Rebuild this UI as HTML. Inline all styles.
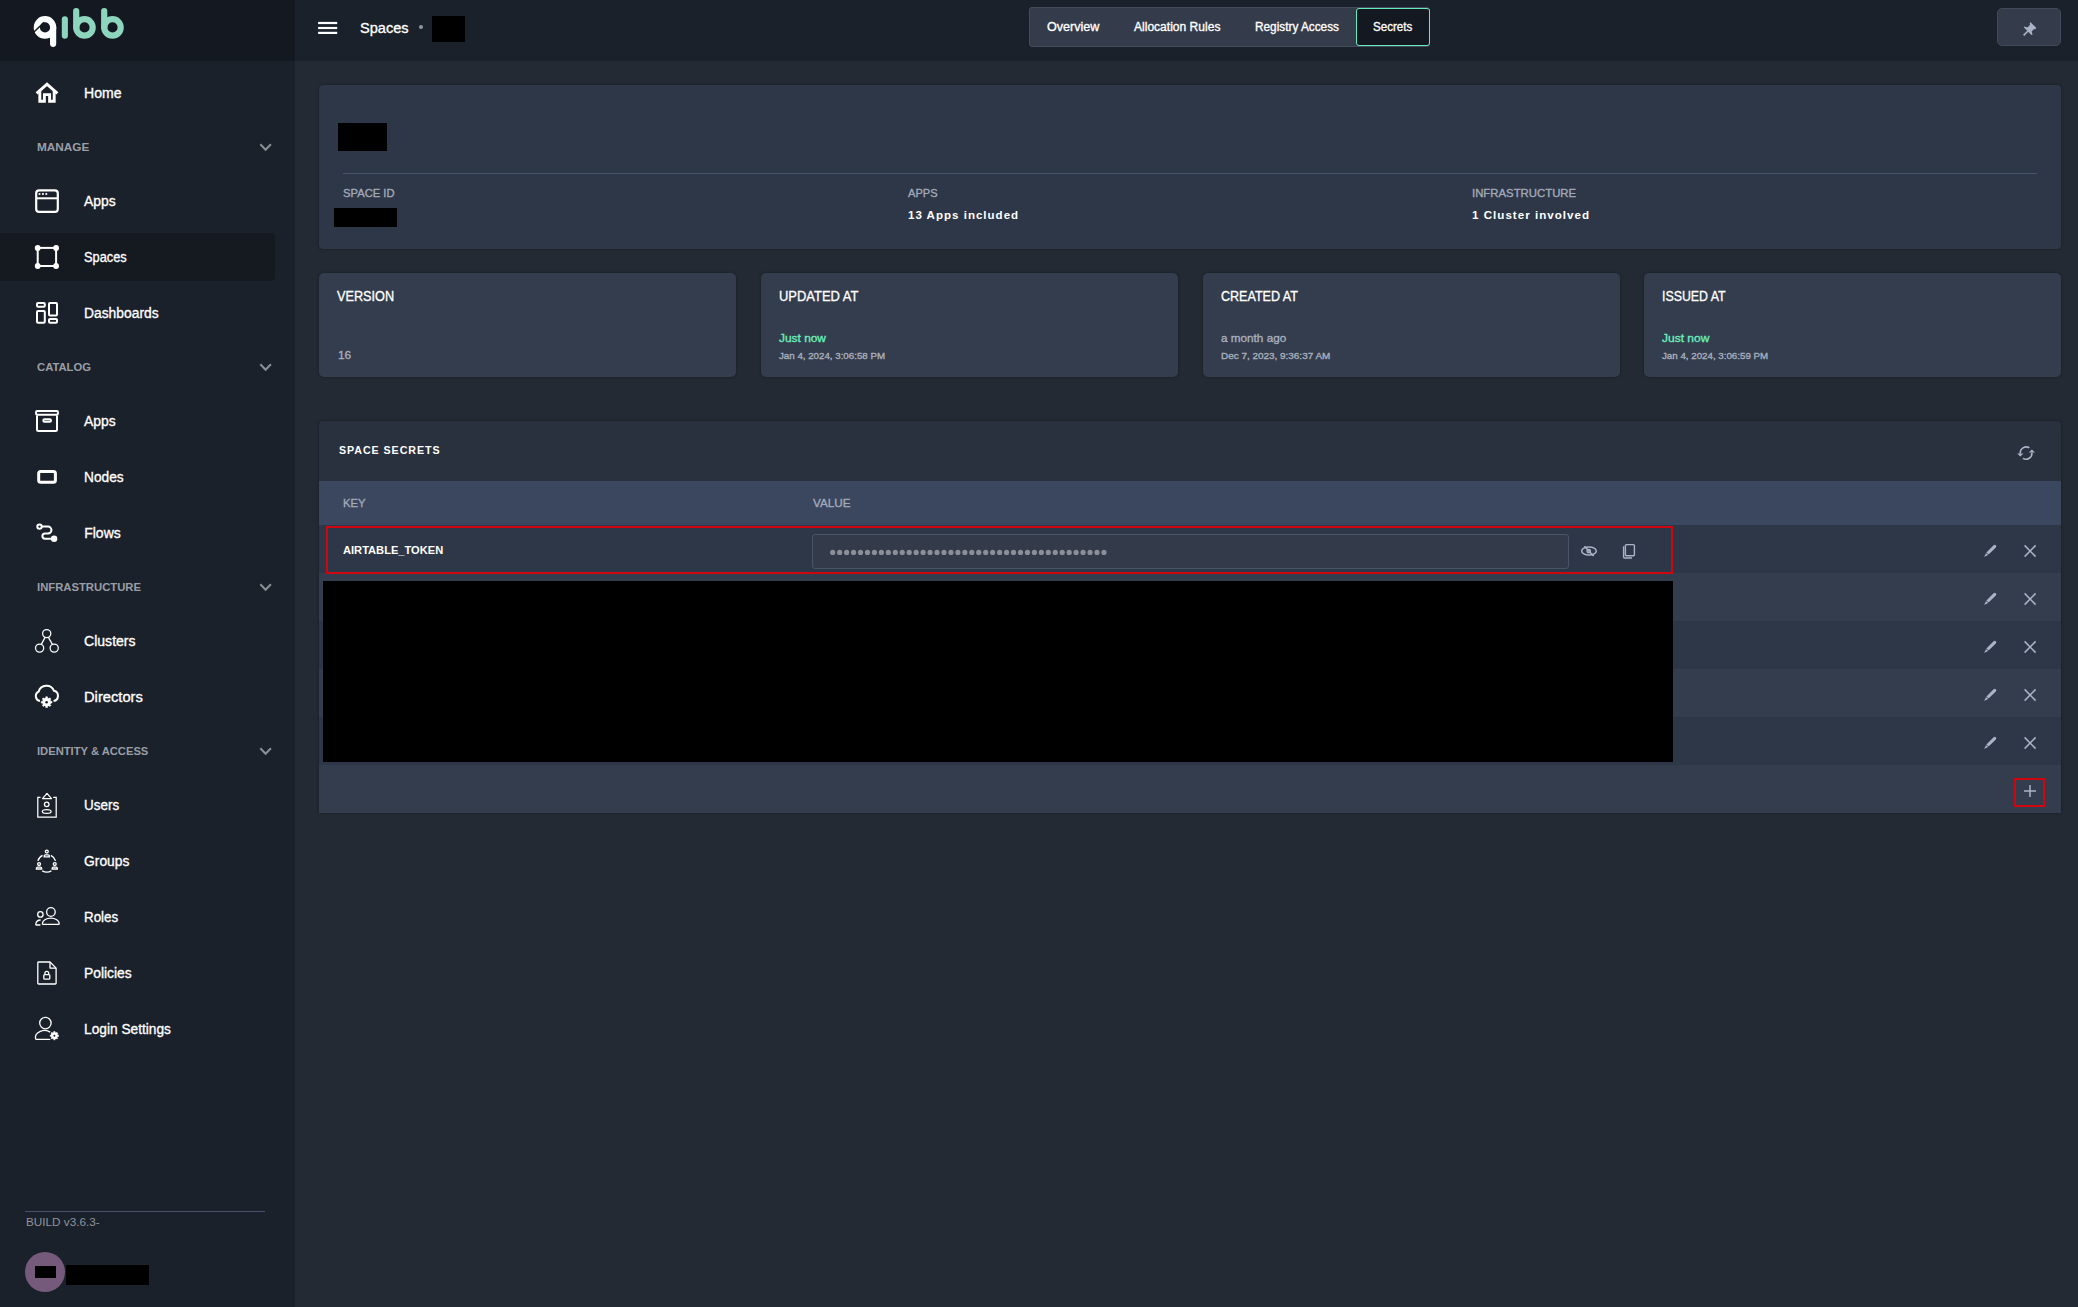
<!DOCTYPE html><html><head><meta charset="utf-8"><style>
*{margin:0;padding:0;box-sizing:border-box}
html,body{width:2078px;height:1307px;overflow:hidden;background:#232a33;font-family:"Liberation Sans",sans-serif;color:#fff}
.t{position:absolute;line-height:1;white-space:nowrap}
.b{position:absolute}
svg{position:absolute;overflow:visible}
</style></head><body>
<div class="b" style="left:0;top:0;width:295px;height:1307px;background:#1b212b"></div>
<div class="b" style="left:0;top:0;width:295px;height:61px;background:#141820"></div>
<svg style="left:25px;top:5px" width="110" height="50" viewBox="0 0 110 50">
<g fill="none" stroke-linecap="round">
<circle cx="20" cy="22.4" r="8.2" stroke="#fff" stroke-width="6.2"/>
<line x1="28.1" y1="22.4" x2="28.1" y2="38.8" stroke="#fff" stroke-width="6.2"/>
<line x1="7.6" y1="28.2" x2="19.2" y2="17.2" stroke="#141820" stroke-width="1.5" stroke-linecap="butt"/>
<line x1="39.85" y1="14.2" x2="39.85" y2="30.8" stroke="#8dd5bd" stroke-width="6.1"/>
<circle cx="59.5" cy="22.4" r="8.2" stroke="#8dd5bd" stroke-width="6.2"/>
<line x1="51.2" y1="6" x2="51.2" y2="22.4" stroke="#8dd5bd" stroke-width="6.2"/>
<circle cx="87.5" cy="22.4" r="8.2" stroke="#8dd5bd" stroke-width="6.2"/>
<line x1="79.2" y1="6" x2="79.2" y2="22.4" stroke="#8dd5bd" stroke-width="6.2"/>
</g></svg>
<svg style="left:0;top:69px" width="70" height="48" viewBox="0 0 70 48"><g fill="none" stroke="#fff"><path d="M36.6,24.4 L47,15.1 L57.4,24.4" stroke-width="2.9" stroke-linejoin="miter"/><path d="M39.8,22 V32.3 H44.4 V25.6 H49.6 V32.3 H54.2 V22" stroke-width="2.9" stroke-linejoin="miter"/></g></svg>
<div class="t" style="left:84.20px;top:86.15px;font-size:14px;color:#fff;font-weight:normal;-webkit-text-stroke:0.32px #fff;letter-spacing:0px;transform:scaleX(1.0032);transform-origin:0 0;">Home</div>

<svg style="left:0;top:177px" width="70" height="48" viewBox="0 0 70 48"><g fill="none" stroke="#fff"><rect x="36.2" y="13.3" width="21.6" height="21.6" rx="3" stroke-width="2.2"/><line x1="36.2" y1="21.3" x2="57.8" y2="21.3" stroke-width="2"/><g fill="#fff" stroke="none"><rect x="38.6" y="16.1" width="1.8" height="1.8"/><rect x="42" y="16.1" width="1.8" height="1.8"/><rect x="45.4" y="16.1" width="1.8" height="1.8"/></g></g></svg>
<div class="t" style="left:84.20px;top:194.15px;font-size:14px;color:#fff;font-weight:normal;-webkit-text-stroke:0.32px #fff;letter-spacing:0px;transform:scaleX(0.9931);transform-origin:0 0;">Apps</div>

<div class="b" style="left:0;top:233px;width:275px;height:48px;background:#151920;border-radius:0 4px 4px 0"></div>
<svg style="left:0;top:233px" width="70" height="48" viewBox="0 0 70 48"><g fill="none" stroke="#fff"><rect x="37.7" y="14.9" width="18.4" height="18.1" stroke-width="2"/><g fill="#fff" stroke="none"><circle cx="37.7" cy="14.9" r="2.9"/><circle cx="56.1" cy="14.9" r="2.9"/><circle cx="37.7" cy="33" r="2.9"/><circle cx="56.1" cy="33" r="2.9"/></g></g></svg>
<div class="t" style="left:84.20px;top:250.15px;font-size:14px;color:#fff;font-weight:normal;-webkit-text-stroke:0.32px #fff;letter-spacing:0px;transform:scaleX(0.9145);transform-origin:0 0;">Spaces</div>

<svg style="left:0;top:289px" width="70" height="48" viewBox="0 0 70 48"><g fill="none" stroke="#fff"><g stroke-width="2"><rect x="37" y="14" width="7.8" height="3.8" rx="1"/><rect x="37" y="22" width="7.8" height="11.8" rx="1"/><rect x="49" y="14" width="8" height="12.4" rx="1"/><rect x="49" y="30" width="8" height="3.8" rx="1"/></g></g></svg>
<div class="t" style="left:84.20px;top:306.15px;font-size:14px;color:#fff;font-weight:normal;-webkit-text-stroke:0.32px #fff;letter-spacing:0px;transform:scaleX(0.9886);transform-origin:0 0;">Dashboards</div>

<svg style="left:0;top:397px" width="70" height="48" viewBox="0 0 70 48"><g fill="none" stroke="#fff"><rect x="36.1" y="14.1" width="21.8" height="3.6" rx="1" stroke-width="2"/><path d="M37,18.5 V32.4 a1.5,1.5 0 0 0 1.5,1.5 H55.5 a1.5,1.5 0 0 0 1.5,-1.5 V18.5" stroke-width="2"/><rect x="43.3" y="22.3" width="7.7" height="2.4" rx="1.2" stroke-width="2"/></g></svg>
<div class="t" style="left:84.20px;top:414.15px;font-size:14px;color:#fff;font-weight:normal;-webkit-text-stroke:0.32px #fff;letter-spacing:0px;transform:scaleX(0.9931);transform-origin:0 0;">Apps</div>

<svg style="left:0;top:453px" width="70" height="48" viewBox="0 0 70 48"><g fill="none" stroke="#fff"><rect x="38.7" y="18.4" width="16.7" height="10.8" rx="2" stroke-width="3"/></g></svg>
<div class="t" style="left:84.20px;top:470.15px;font-size:14px;color:#fff;font-weight:normal;-webkit-text-stroke:0.32px #fff;letter-spacing:0px;transform:scaleX(0.9812);transform-origin:0 0;">Nodes</div>

<svg style="left:0;top:509px" width="70" height="48" viewBox="0 0 70 48"><g fill="none" stroke="#fff"><circle cx="39.5" cy="17.6" r="2.2" stroke-width="2"/><path d="M41.8,17.6 H48 A3.45,3.45 0 0 1 48,24.5 H45 A2.6,2.6 0 0 0 45,29.7 H52" stroke-width="2"/><circle cx="54.1" cy="29.7" r="3.2" fill="#fff" stroke="none"/></g></svg>
<div class="t" style="left:84.20px;top:526.15px;font-size:14px;color:#fff;font-weight:normal;-webkit-text-stroke:0.32px #fff;letter-spacing:0px;">Flows</div>

<svg style="left:0;top:617px" width="70" height="48" viewBox="0 0 70 48"><g fill="none" stroke="#fff"><g stroke-width="1.25"><circle cx="46.7" cy="16.6" r="4.1"/><circle cx="39.6" cy="31.1" r="4.1"/><circle cx="54.2" cy="31.1" r="4.1"/><line x1="45" y1="20.4" x2="41.4" y2="27.4"/><line x1="48.4" y1="20.4" x2="52.4" y2="27.4"/></g></g></svg>
<div class="t" style="left:84.20px;top:634.15px;font-size:14px;color:#fff;font-weight:normal;-webkit-text-stroke:0.32px #fff;letter-spacing:0px;transform:scaleX(1.0043);transform-origin:0 0;">Clusters</div>

<svg style="left:0;top:673px" width="70" height="48" viewBox="0 0 70 48"><g fill="none" stroke="#fff"><path d="M40,28 A5,5 0 0 1 38.6,18.6 A8.2,8.2 0 0 1 54,17.8 A5.2,5.2 0 0 1 53.5,28" stroke-width="2"/><g><circle cx="46.6" cy="29.2" r="6.7" fill="#1b212b" stroke="none"/><path d="M50.52,28.42 L51.93,28.31 L51.93,30.09 L50.52,29.98 L49.93,31.42 L50.99,32.34 L49.74,33.59 L48.82,32.53 L47.38,33.12 L47.49,34.53 L45.71,34.53 L45.82,33.12 L44.38,32.53 L43.46,33.59 L42.21,32.34 L43.27,31.42 L42.68,29.98 L41.27,30.09 L41.27,28.31 L42.68,28.42 L43.27,26.98 L42.21,26.06 L43.46,24.81 L44.38,25.87 L45.82,25.28 L45.71,23.87 L47.49,23.87 L47.38,25.28 L48.82,25.87 L49.74,24.81 L50.99,26.06 L49.93,26.98 Z" fill="#fff" stroke="#fff" stroke-width="0.6" stroke-linejoin="round"/><circle cx="46.6" cy="29.2" r="4.0" fill="#fff" stroke="none"/><circle cx="46.6" cy="29.2" r="1.3" fill="#1b212b" stroke="none"/></g></g></svg>
<div class="t" style="left:84.20px;top:690.15px;font-size:14px;color:#fff;font-weight:normal;-webkit-text-stroke:0.32px #fff;letter-spacing:0px;transform:scaleX(1.0500);transform-origin:0 0;">Directors</div>

<svg style="left:0;top:781px" width="70" height="48" viewBox="0 0 70 48"><g fill="none" stroke="#fff"><g stroke-width="1.25"><path d="M40.5,16.3 H37.8 V36 H56.2 V16.3 H53.2"/><path d="M42.5,17.6 L47,12.4 L51.5,17.6 Z" stroke-linejoin="round"/><circle cx="46.7" cy="23.3" r="2.3"/><ellipse cx="46.7" cy="30.4" rx="4.4" ry="1.9"/></g></g></svg>
<div class="t" style="left:84.20px;top:798.15px;font-size:14px;color:#fff;font-weight:normal;-webkit-text-stroke:0.32px #fff;letter-spacing:0px;transform:scaleX(0.9606);transform-origin:0 0;">Users</div>

<svg style="left:0;top:837px" width="70" height="48" viewBox="0 0 70 48"><g fill="none" stroke="#fff"><g stroke-width="1.35"><path d="M37.9,23.9 A9,9 0 0 1 42.5,18.3"/><path d="M50.9,18.3 A9,9 0 0 1 55.5,23.9"/><path d="M42.2,33.8 A9,9 0 0 0 51.4,33.8"/><circle cx="46.8" cy="14.6" r="1.45"/><path d="M44.20,19.8 V19.10 A1.3,1.3 0 0 1 45.50,17.8 H48.10 A1.3,1.3 0 0 1 49.40,19.10 V19.8 Z"/><circle cx="39.05" cy="27.0" r="1.45"/><path d="M36.45,32.0 V31.40 A1.3,1.3 0 0 1 37.75,30.1 H40.35 A1.3,1.3 0 0 1 41.65,31.40 V32.0 Z"/><circle cx="54.75" cy="27.0" r="1.45"/><path d="M52.15,32.0 V31.40 A1.3,1.3 0 0 1 53.45,30.1 H56.05 A1.3,1.3 0 0 1 57.35,31.40 V32.0 Z"/></g></g></svg>
<div class="t" style="left:84.20px;top:854.15px;font-size:14px;color:#fff;font-weight:normal;-webkit-text-stroke:0.32px #fff;letter-spacing:0px;transform:scaleX(0.9887);transform-origin:0 0;">Groups</div>

<svg style="left:0;top:893px" width="70" height="48" viewBox="0 0 70 48"><g fill="none" stroke="#fff"><g stroke-width="1.3"><circle cx="50.9" cy="19" r="4.3"/><path d="M43.2,31.4 H58.4 A0.9,0.9 0 0 0 59.2,30.4 A8.3,5.2 0 0 0 42.4,30.4 A0.9,0.9 0 0 0 43.2,31.4 Z"/><circle cx="40.4" cy="21.4" r="2.7"/><path d="M40.4,32 H36.2 A1,1 0 0 1 35.8,31 A5,4.5 0 0 1 40.6,27"/></g></g></svg>
<div class="t" style="left:84.20px;top:910.15px;font-size:14px;color:#fff;font-weight:normal;-webkit-text-stroke:0.32px #fff;letter-spacing:0px;transform:scaleX(0.9561);transform-origin:0 0;">Roles</div>

<svg style="left:0;top:949px" width="70" height="48" viewBox="0 0 70 48"><g fill="none" stroke="#fff"><g stroke-width="1.3" stroke-linejoin="round"><path d="M38.6,13 H50 L56.1,19.1 V34.2 A0.8,0.8 0 0 1 55.3,35 H38.6 A0.8,0.8 0 0 1 37.8,34.2 V13.8 A0.8,0.8 0 0 1 38.6,13 Z"/><path d="M50,13 V19.1 H56.1"/><rect x="43.8" y="25.6" width="6" height="4.6" rx="1"/><path d="M44.9,25.6 V24.2 A1.9,1.9 0 0 1 48.7,24.2 V25.6"/></g></g></svg>
<div class="t" style="left:84.20px;top:966.15px;font-size:14px;color:#fff;font-weight:normal;-webkit-text-stroke:0.32px #fff;letter-spacing:0px;transform:scaleX(0.9890);transform-origin:0 0;">Policies</div>

<svg style="left:0;top:1005px" width="70" height="48" viewBox="0 0 70 48"><g fill="none" stroke="#fff"><g stroke-width="1.3"><circle cx="45.4" cy="18.1" r="5.7"/><path d="M50.5,34.4 H36.2 A1,1 0 0 1 35.5,33.4 A9,7 0 0 1 50.5,27.4"/></g><circle cx="54.4" cy="30.7" r="5.5" fill="#1b212b" stroke="none"/><path d="M57.44,30.10 L58.54,30.01 L58.54,31.39 L57.44,31.30 L56.98,32.42 L57.82,33.14 L56.84,34.12 L56.12,33.28 L55.00,33.74 L55.09,34.84 L53.71,34.84 L53.80,33.74 L52.68,33.28 L51.96,34.12 L50.98,33.14 L51.82,32.42 L51.36,31.30 L50.26,31.39 L50.26,30.01 L51.36,30.10 L51.82,28.98 L50.98,28.26 L51.96,27.28 L52.68,28.12 L53.80,27.66 L53.71,26.56 L55.09,26.56 L55.00,27.66 L56.12,28.12 L56.84,27.28 L57.82,28.26 L56.98,28.98 Z" fill="#fff" stroke="#fff" stroke-width="0.6" stroke-linejoin="round"/><circle cx="54.4" cy="30.7" r="3.1" fill="#fff" stroke="none"/><circle cx="54.4" cy="30.7" r="1.0" fill="#1b212b" stroke="none"/></g></svg>
<div class="t" style="left:84.20px;top:1022.15px;font-size:14px;color:#fff;font-weight:normal;-webkit-text-stroke:0.32px #fff;letter-spacing:0px;transform:scaleX(0.9802);transform-origin:0 0;">Login Settings</div>

<div class="t" style="left:36.70px;top:141.69px;font-size:11px;color:#9a9ea6;font-weight:bold;letter-spacing:0px;transform:scaleX(1.0717);transform-origin:0 0;">MANAGE</div>

<svg style="left:259px;top:143px" width="14" height="10" viewBox="0 0 14 10"><path d="M1.3,1.3 L6.6,6.8 L11.9,1.3" fill="none" stroke="#8b8f96" stroke-width="2"/></svg>
<div class="t" style="left:36.70px;top:361.69px;font-size:11px;color:#9a9ea6;font-weight:bold;letter-spacing:0px;transform:scaleX(1.0238);transform-origin:0 0;">CATALOG</div>

<svg style="left:259px;top:363px" width="14" height="10" viewBox="0 0 14 10"><path d="M1.3,1.3 L6.6,6.8 L11.9,1.3" fill="none" stroke="#8b8f96" stroke-width="2"/></svg>
<div class="t" style="left:36.70px;top:581.69px;font-size:11px;color:#9a9ea6;font-weight:bold;letter-spacing:0px;transform:scaleX(1.0254);transform-origin:0 0;">INFRASTRUCTURE</div>

<svg style="left:259px;top:583px" width="14" height="10" viewBox="0 0 14 10"><path d="M1.3,1.3 L6.6,6.8 L11.9,1.3" fill="none" stroke="#8b8f96" stroke-width="2"/></svg>
<div class="t" style="left:36.70px;top:745.69px;font-size:11px;color:#9a9ea6;font-weight:bold;letter-spacing:0px;transform:scaleX(1.0174);transform-origin:0 0;">IDENTITY &amp; ACCESS</div>

<svg style="left:259px;top:747px" width="14" height="10" viewBox="0 0 14 10"><path d="M1.3,1.3 L6.6,6.8 L11.9,1.3" fill="none" stroke="#8b8f96" stroke-width="2"/></svg>
<div class="b" style="left:25px;top:1210.5px;width:240px;height:1px;background:#46506a"></div>
<div class="t" style="left:26.40px;top:1216.69px;font-size:11px;color:#909399;font-weight:normal;letter-spacing:0px;transform:scaleX(1.0654);transform-origin:0 0;">BUILD v3.6.3-</div>

<div class="b" style="left:25px;top:1252px;width:40px;height:40px;border-radius:50%;background:#765a7b"></div>
<div class="b" style="left:35px;top:1266px;width:21px;height:12px;background:#000"></div>
<div class="b" style="left:66px;top:1265px;width:83px;height:20px;background:#000"></div>
<div class="b" style="left:295px;top:0;width:1783px;height:61px;background:#1b212b"></div>
<svg style="left:318px;top:20px" width="20" height="16" viewBox="0 0 20 16"><g stroke="#fff" stroke-width="2.2"><line x1="0.1" y1="3" x2="19.2" y2="3"/><line x1="0.1" y1="8" x2="19.2" y2="8"/><line x1="0.1" y1="12.9" x2="19.2" y2="12.9"/></g></svg>
<div class="t" style="left:360.00px;top:19.78px;font-size:15.5px;color:#fff;font-weight:normal;-webkit-text-stroke:0.32px #fff;letter-spacing:0px;transform:scaleX(0.9402);transform-origin:0 0;">Spaces</div>

<div class="b" style="left:419.3px;top:25.3px;width:3.4px;height:3.4px;border-radius:50%;background:#8a8f99"></div>
<div class="b" style="left:432px;top:16px;width:33px;height:26px;background:#000"></div>
<div class="b" style="left:1029px;top:7px;width:401px;height:40px;background:#343c4b;border:1px solid #444c5c;border-radius:3px"></div>
<div class="b" style="left:1356px;top:8px;width:74px;height:38px;background:#141820;border:1.6px solid #66e9bf;border-radius:3px"></div>
<div class="t" style="left:1047.00px;top:20.64px;font-size:12px;color:#fff;font-weight:normal;-webkit-text-stroke:0.32px #fff;letter-spacing:0px;transform:scaleX(1.0472);transform-origin:0 0;">Overview</div>

<div class="t" style="left:1133.60px;top:20.64px;font-size:12px;color:#fff;font-weight:normal;-webkit-text-stroke:0.32px #fff;letter-spacing:0px;transform:scaleX(1.0042);transform-origin:0 0;">Allocation Rules</div>

<div class="t" style="left:1254.80px;top:20.64px;font-size:12px;color:#fff;font-weight:normal;-webkit-text-stroke:0.32px #fff;letter-spacing:0px;transform:scaleX(0.9838);transform-origin:0 0;">Registry Access</div>

<div class="t" style="left:1372.70px;top:20.64px;font-size:12px;color:#fff;font-weight:normal;-webkit-text-stroke:0.32px #fff;letter-spacing:0px;transform:scaleX(0.9661);transform-origin:0 0;">Secrets</div>

<div class="b" style="left:1997px;top:8px;width:64px;height:38px;background:#343c4b;border:1px solid #414a5a;border-radius:5px"></div>
<svg style="left:2020px;top:19px" width="20" height="20" viewBox="0 0 20 20"><g fill="#aab4c8"><path d="M10.3,3 L16.4,9.1 L15.2,10.3 L14.2,9.9 L11.6,12.5 L12.6,15.6 L11.4,16 L4.0,8.6 L4.4,7.4 L7.5,8.4 L10.1,5.8 L9.7,4.8 Z"/></g><line x1="8" y1="12" x2="3.6" y2="16.4" stroke="#aab4c8" stroke-width="1.6"/></svg>
<div class="b" style="left:319px;top:85px;width:1742px;height:164px;background:#2e3747;border-radius:4px;box-shadow:0 0 3px rgba(0,0,0,0.35)"></div>
<div class="b" style="left:338px;top:123px;width:49px;height:28px;background:#000"></div>
<div class="b" style="left:343px;top:172.5px;width:1694px;height:1px;background:#475670"></div>
<div class="t" style="left:342.70px;top:188.49px;font-size:11px;color:#a3abbb;font-weight:normal;-webkit-text-stroke:0.32px #a3abbb;letter-spacing:0px;transform:scaleX(1.0209);transform-origin:0 0;">SPACE ID</div>

<div class="t" style="left:907.90px;top:188.49px;font-size:11px;color:#a3abbb;font-weight:normal;-webkit-text-stroke:0.32px #a3abbb;letter-spacing:0px;transform:scaleX(1.0078);transform-origin:0 0;">APPS</div>

<div class="t" style="left:907.90px;top:210.17px;font-size:11.5px;color:#fff;font-weight:bold;letter-spacing:1.0px;transform:scaleX(1.0031);transform-origin:0 0;">13 Apps included</div>

<div class="t" style="left:1472.40px;top:188.49px;font-size:11px;color:#a3abbb;font-weight:normal;-webkit-text-stroke:0.32px #a3abbb;letter-spacing:0px;transform:scaleX(1.0326);transform-origin:0 0;">INFRASTRUCTURE</div>

<div class="t" style="left:1472.40px;top:210.17px;font-size:11.5px;color:#fff;font-weight:bold;letter-spacing:1.0px;transform:scaleX(1.0089);transform-origin:0 0;">1 Cluster involved</div>

<div class="b" style="left:334px;top:207.5px;width:63px;height:19.5px;background:#000"></div>
<div class="b" style="left:319px;top:273px;width:417px;height:104px;background:#343d4d;border-radius:5px;box-shadow:0 0 3px rgba(0,0,0,0.35)"></div>
<div class="t" style="left:337.00px;top:289.15px;font-size:14px;color:#fff;font-weight:normal;-webkit-text-stroke:0.32px #fff;letter-spacing:0px;transform:scaleX(0.9063);transform-origin:0 0;">VERSION</div>

<div class="t" style="left:337.60px;top:349.59px;font-size:11px;color:#a9b0be;font-weight:normal;-webkit-text-stroke:0.32px #a9b0be;letter-spacing:0px;transform:scaleX(1.0811);transform-origin:0 0;">16</div>

<div class="b" style="left:761px;top:273px;width:417px;height:104px;background:#343d4d;border-radius:5px;box-shadow:0 0 3px rgba(0,0,0,0.35)"></div>
<div class="t" style="left:779.00px;top:289.15px;font-size:14px;color:#fff;font-weight:normal;-webkit-text-stroke:0.32px #fff;letter-spacing:0px;transform:scaleX(0.9240);transform-origin:0 0;">UPDATED AT</div>

<div class="t" style="left:779.00px;top:332.69px;font-size:11px;color:#6aeebd;font-weight:normal;-webkit-text-stroke:0.32px #6aeebd;letter-spacing:0px;transform:scaleX(1.0817);transform-origin:0 0;">Just now</div>

<div class="t" style="left:779.00px;top:352.28px;font-size:9px;color:#a9b0be;font-weight:normal;-webkit-text-stroke:0.32px #a9b0be;letter-spacing:0px;transform:scaleX(1.0810);transform-origin:0 0;">Jan 4, 2024, 3:06:58 PM</div>

<div class="b" style="left:1203px;top:273px;width:417px;height:104px;background:#343d4d;border-radius:5px;box-shadow:0 0 3px rgba(0,0,0,0.35)"></div>
<div class="t" style="left:1221.00px;top:289.15px;font-size:14px;color:#fff;font-weight:normal;-webkit-text-stroke:0.32px #fff;letter-spacing:0px;transform:scaleX(0.8961);transform-origin:0 0;">CREATED AT</div>

<div class="t" style="left:1221.00px;top:332.69px;font-size:11px;color:#a9b0be;font-weight:normal;-webkit-text-stroke:0.32px #a9b0be;letter-spacing:0px;transform:scaleX(1.0661);transform-origin:0 0;">a month ago</div>

<div class="t" style="left:1221.00px;top:352.28px;font-size:9px;color:#a9b0be;font-weight:normal;-webkit-text-stroke:0.32px #a9b0be;letter-spacing:0px;transform:scaleX(1.1030);transform-origin:0 0;">Dec 7, 2023, 9:36:37 AM</div>

<div class="b" style="left:1644px;top:273px;width:417px;height:104px;background:#343d4d;border-radius:5px;box-shadow:0 0 3px rgba(0,0,0,0.35)"></div>
<div class="t" style="left:1662.00px;top:289.15px;font-size:14px;color:#fff;font-weight:normal;-webkit-text-stroke:0.32px #fff;letter-spacing:0px;transform:scaleX(0.8821);transform-origin:0 0;">ISSUED AT</div>

<div class="t" style="left:1662.00px;top:332.69px;font-size:11px;color:#6aeebd;font-weight:normal;-webkit-text-stroke:0.32px #6aeebd;letter-spacing:0px;transform:scaleX(1.0909);transform-origin:0 0;">Just now</div>

<div class="t" style="left:1662.00px;top:352.28px;font-size:9px;color:#a9b0be;font-weight:normal;-webkit-text-stroke:0.32px #a9b0be;letter-spacing:0px;transform:scaleX(1.0820);transform-origin:0 0;">Jan 4, 2024, 3:06:59 PM</div>

<div class="b" style="left:319px;top:421px;width:1742px;height:392px;background:#2a313e;border-radius:4px 4px 0 0;overflow:hidden;box-shadow:0 0 3px rgba(0,0,0,0.35)">
<div class="b" style="left:0;top:60px;width:1742px;height:44px;background:#3b475f"></div>
<div class="b" style="left:0;top:104px;width:1742px;height:48px;background:#2e3747"></div>
<div class="b" style="left:0;top:152px;width:1742px;height:48px;background:#343d4d"></div>
<div class="b" style="left:0;top:200px;width:1742px;height:48px;background:#2e3747"></div>
<div class="b" style="left:0;top:248px;width:1742px;height:48px;background:#343d4d"></div>
<div class="b" style="left:0;top:296px;width:1742px;height:48px;background:#2e3747"></div>
<div class="b" style="left:0;top:344px;width:1742px;height:48px;background:#343d4d"></div>
</div>
<div class="t" style="left:339.00px;top:445.27px;font-size:11.5px;color:#fff;font-weight:bold;letter-spacing:1.0px;transform:scaleX(0.9284);transform-origin:0 0;">SPACE SECRETS</div>

<div class="t" style="left:343.30px;top:497.89px;font-size:11px;color:#a3abbb;font-weight:normal;-webkit-text-stroke:0.32px #a3abbb;letter-spacing:0px;transform:scaleX(1.0227);transform-origin:0 0;">KEY</div>

<div class="t" style="left:812.60px;top:497.89px;font-size:11px;color:#a3abbb;font-weight:normal;-webkit-text-stroke:0.32px #a3abbb;letter-spacing:0px;transform:scaleX(1.0637);transform-origin:0 0;">VALUE</div>

<svg style="left:2016px;top:443px" width="20" height="20" viewBox="0 0 20 20"><g fill="none" stroke="#aab4c8" stroke-width="1.6"><path d="M13.4,4.8 A6,6 0 0 0 4.3,10.6"/><path d="M6.9,15.4 A6,6 0 0 0 15.9,9.6"/></g><g fill="#aab4c8"><path d="M1.1,10.4 L7.5,10.4 L4.3,13.4 Z"/><path d="M12.7,9.6 L19.1,9.6 L15.9,6.6 Z"/></g></svg>
<div class="b" style="left:325.5px;top:526px;width:1347px;height:48px;border:2px solid #cf0610"></div>
<div class="t" style="left:343.30px;top:544.87px;font-size:11.5px;color:#fff;font-weight:bold;letter-spacing:0px;transform:scaleX(0.9660);transform-origin:0 0;">AIRTABLE_TOKEN</div>

<div class="b" style="left:812px;top:534px;width:757px;height:35px;background:#333a4a;border:1px solid #4b5467;border-radius:3px"></div>
<svg style="left:0;top:0" width="2078" height="1307" viewBox="0 0 2078 1307"><g fill="#8a8f98"><circle cx="832.70" cy="552.4" r="2.6"/><circle cx="839.66" cy="552.4" r="2.6"/><circle cx="846.61" cy="552.4" r="2.6"/><circle cx="853.57" cy="552.4" r="2.6"/><circle cx="860.52" cy="552.4" r="2.6"/><circle cx="867.48" cy="552.4" r="2.6"/><circle cx="874.43" cy="552.4" r="2.6"/><circle cx="881.38" cy="552.4" r="2.6"/><circle cx="888.34" cy="552.4" r="2.6"/><circle cx="895.30" cy="552.4" r="2.6"/><circle cx="902.25" cy="552.4" r="2.6"/><circle cx="909.21" cy="552.4" r="2.6"/><circle cx="916.16" cy="552.4" r="2.6"/><circle cx="923.12" cy="552.4" r="2.6"/><circle cx="930.07" cy="552.4" r="2.6"/><circle cx="937.03" cy="552.4" r="2.6"/><circle cx="943.98" cy="552.4" r="2.6"/><circle cx="950.94" cy="552.4" r="2.6"/><circle cx="957.89" cy="552.4" r="2.6"/><circle cx="964.85" cy="552.4" r="2.6"/><circle cx="971.80" cy="552.4" r="2.6"/><circle cx="978.76" cy="552.4" r="2.6"/><circle cx="985.71" cy="552.4" r="2.6"/><circle cx="992.67" cy="552.4" r="2.6"/><circle cx="999.62" cy="552.4" r="2.6"/><circle cx="1006.58" cy="552.4" r="2.6"/><circle cx="1013.53" cy="552.4" r="2.6"/><circle cx="1020.49" cy="552.4" r="2.6"/><circle cx="1027.44" cy="552.4" r="2.6"/><circle cx="1034.39" cy="552.4" r="2.6"/><circle cx="1041.35" cy="552.4" r="2.6"/><circle cx="1048.31" cy="552.4" r="2.6"/><circle cx="1055.26" cy="552.4" r="2.6"/><circle cx="1062.22" cy="552.4" r="2.6"/><circle cx="1069.17" cy="552.4" r="2.6"/><circle cx="1076.12" cy="552.4" r="2.6"/><circle cx="1083.08" cy="552.4" r="2.6"/><circle cx="1090.04" cy="552.4" r="2.6"/><circle cx="1096.99" cy="552.4" r="2.6"/><circle cx="1103.95" cy="552.4" r="2.6"/></g></svg>
<svg style="left:1579px;top:541px" width="20" height="20" viewBox="0 0 20 20"><g fill="none" stroke="#aab4c8" stroke-width="1.5"><ellipse cx="10" cy="10" rx="7.3" ry="4.1"/><circle cx="9.7" cy="10.1" r="1.7"/><line x1="5.4" y1="5.2" x2="14.6" y2="14.9"/></g></svg>
<svg style="left:1619px;top:541px" width="20" height="20" viewBox="0 0 20 20"><g fill="none" stroke="#aab4c8" stroke-width="1.4"><rect x="6.4" y="3.6" width="9" height="11.2" rx="1"/><path d="M4.6,5.2 V16 a1,1 0 0 0 1,1 H13"/></g></svg>
<svg style="left:1980px;top:541px" width="20" height="20" viewBox="0 0 20 20"><g fill="#aab4c8"><path d="M13.6,4.2 A1.5,1.5 0 0 1 15.8,6.4 L8.6,13.6 L6.4,11.4 Z"/><path d="M6.0,11.9 L8.1,14.0 L4.2,15.9 Z"/></g></svg>
<svg style="left:2019.5px;top:541px" width="20" height="20" viewBox="0 0 20 20"><g stroke="#aab4c8" stroke-width="1.5"><line x1="4.6" y1="4.4" x2="15.6" y2="15.6"/><line x1="15.6" y1="4.4" x2="4.6" y2="15.6"/></g></svg>
<svg style="left:1980px;top:589px" width="20" height="20" viewBox="0 0 20 20"><g fill="#aab4c8"><path d="M13.6,4.2 A1.5,1.5 0 0 1 15.8,6.4 L8.6,13.6 L6.4,11.4 Z"/><path d="M6.0,11.9 L8.1,14.0 L4.2,15.9 Z"/></g></svg>
<svg style="left:2019.5px;top:589px" width="20" height="20" viewBox="0 0 20 20"><g stroke="#aab4c8" stroke-width="1.5"><line x1="4.6" y1="4.4" x2="15.6" y2="15.6"/><line x1="15.6" y1="4.4" x2="4.6" y2="15.6"/></g></svg>
<svg style="left:1980px;top:637px" width="20" height="20" viewBox="0 0 20 20"><g fill="#aab4c8"><path d="M13.6,4.2 A1.5,1.5 0 0 1 15.8,6.4 L8.6,13.6 L6.4,11.4 Z"/><path d="M6.0,11.9 L8.1,14.0 L4.2,15.9 Z"/></g></svg>
<svg style="left:2019.5px;top:637px" width="20" height="20" viewBox="0 0 20 20"><g stroke="#aab4c8" stroke-width="1.5"><line x1="4.6" y1="4.4" x2="15.6" y2="15.6"/><line x1="15.6" y1="4.4" x2="4.6" y2="15.6"/></g></svg>
<svg style="left:1980px;top:685px" width="20" height="20" viewBox="0 0 20 20"><g fill="#aab4c8"><path d="M13.6,4.2 A1.5,1.5 0 0 1 15.8,6.4 L8.6,13.6 L6.4,11.4 Z"/><path d="M6.0,11.9 L8.1,14.0 L4.2,15.9 Z"/></g></svg>
<svg style="left:2019.5px;top:685px" width="20" height="20" viewBox="0 0 20 20"><g stroke="#aab4c8" stroke-width="1.5"><line x1="4.6" y1="4.4" x2="15.6" y2="15.6"/><line x1="15.6" y1="4.4" x2="4.6" y2="15.6"/></g></svg>
<svg style="left:1980px;top:733px" width="20" height="20" viewBox="0 0 20 20"><g fill="#aab4c8"><path d="M13.6,4.2 A1.5,1.5 0 0 1 15.8,6.4 L8.6,13.6 L6.4,11.4 Z"/><path d="M6.0,11.9 L8.1,14.0 L4.2,15.9 Z"/></g></svg>
<svg style="left:2019.5px;top:733px" width="20" height="20" viewBox="0 0 20 20"><g stroke="#aab4c8" stroke-width="1.5"><line x1="4.6" y1="4.4" x2="15.6" y2="15.6"/><line x1="15.6" y1="4.4" x2="4.6" y2="15.6"/></g></svg>
<div class="b" style="left:323px;top:581px;width:1350px;height:181px;background:#000"></div>
<div class="b" style="left:2013.8px;top:777.5px;width:31.6px;height:29.6px;border:2px solid #cf0610"></div>
<svg style="left:2019.8px;top:781px" width="20" height="20" viewBox="0 0 20 20"><g stroke="#aab4c8" stroke-width="1.5"><line x1="10" y1="4" x2="10" y2="16"/><line x1="4" y1="10" x2="16" y2="10"/></g></svg>
</body></html>
